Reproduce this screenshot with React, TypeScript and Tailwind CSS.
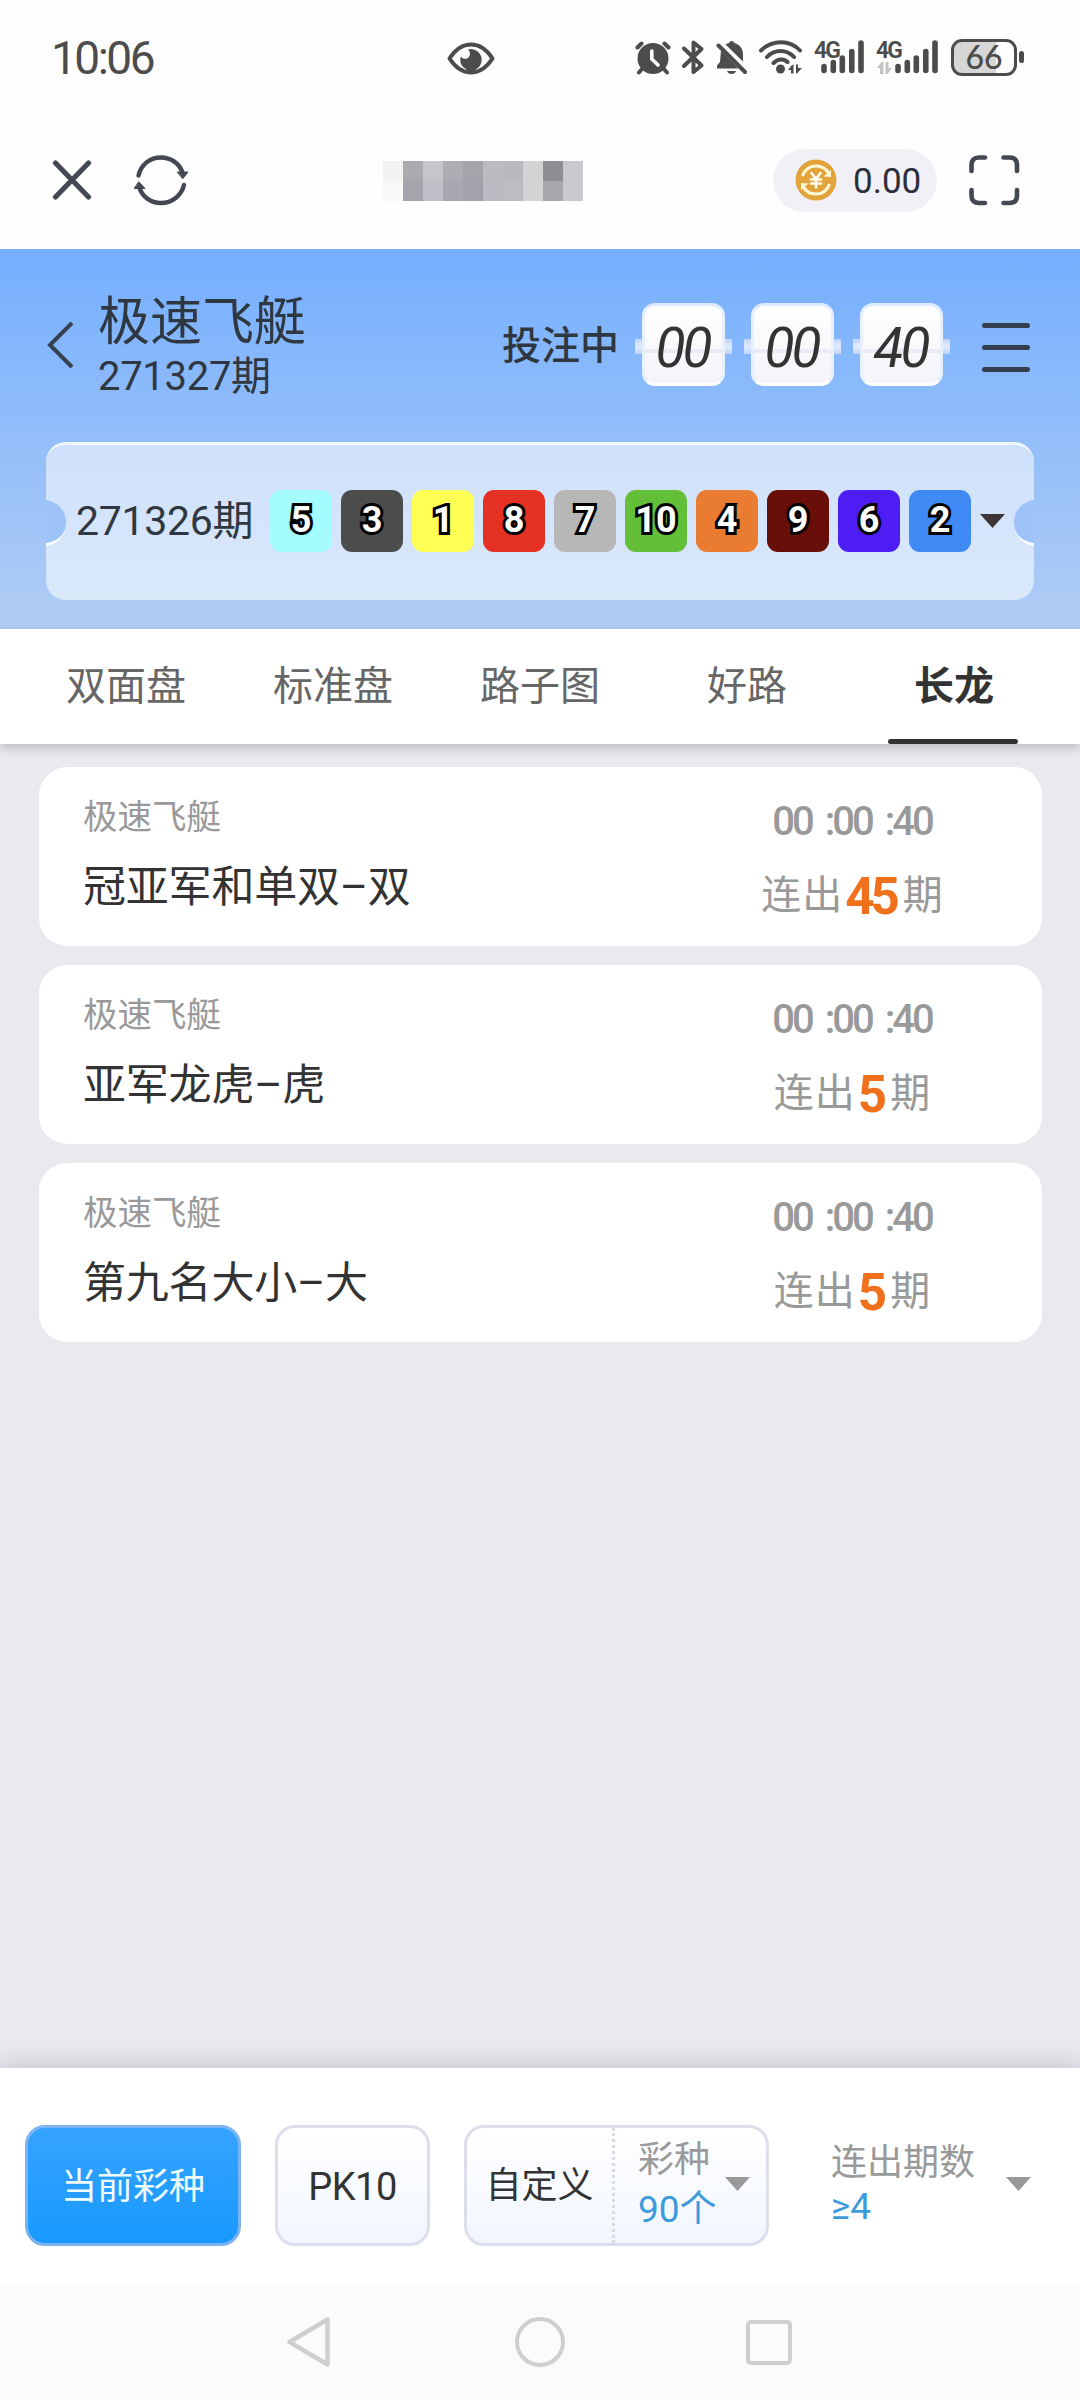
import clsx from "clsx"
import { useState } from "react"

const balls = [
  { num: 5, color: "bg-[#a4fcff]" },
  { num: 3, color: "bg-[#4c4c4c]" },
  { num: 1, color: "bg-[#ffff54]" },
  { num: 8, color: "bg-[#e53124]" },
  { num: 7, color: "bg-[#b7b7b7]" },
  { num: 10, color: "bg-[#63be38]" },
  { num: 4, color: "bg-[#ea7c31]" },
  { num: 9, color: "bg-[#670f08]" },
  { num: 6, color: "bg-[#4d1df3]" },
  { num: 2, color: "bg-[#408af6]" },
]

const tabs = ["双面盘", "标准盘", "路子图", "好路", "长龙"]

const streaks = [
  { game: "极速飞艇", title: "冠亚军和单双–双", time: "00 :00 :40", count: 45 },
  { game: "极速飞艇", title: "亚军龙虎–虎", time: "00 :00 :40", count: 5 },
  { game: "极速飞艇", title: "第九名大小–大", time: "00 :00 :40", count: 5 },
]

// Blurred site title, two rows of 20px cells
const mosaic = [
  "bg-[#f2f2f2]", "bg-[#aaabae]", "bg-[#c5c6ca]", "bg-[#adaeb3]", "bg-[#a4a4aa]",
  "bg-[#bbbcc0]", "bg-[#b7b9be]", "bg-[#d2d3d5]", "bg-[#8e8f94]", "bg-[#c8c9cd]",
  "bg-[#f8f8f8]", "bg-[#a4a5ac]", "bg-[#bfc0c5]", "bg-[#a7a8af]", "bg-[#a2a3aa]",
  "bg-[#bbbcc1]", "bg-[#bcbdc1]", "bg-[#d2d3d5]", "bg-[#a7a8ae]", "bg-[#c8c9cd]",
]

function SignalBars() {
  return (
    <svg width="43" height="34" viewBox="0 0 43 34" stroke="#4c4c4c" strokeWidth="5.6" strokeLinecap="round">
      <path d="M3 26.5V30.5M12.3 22.5V30.5M21.3 18V30.5M30.8 11.5V30.5M40 3V30.5" />
    </svg>
  )
}

function StatusBar() {
  return (
    <div className="relative flex h-[112px] shrink-0 items-center justify-between pr-[56px] pl-[51px] text-[#4c4c4c]">
      <span className="mt-1 text-[46px] leading-none tracking-[-2.5px]">10:06</span>
      <svg className="absolute top-[42px] left-[447px]" width="48" height="33" viewBox="0 0 48 33" fill="none">
        <path d="M2.5 16.5C8 8 15 2.5 24 2.5S40 8 45.5 16.5C40 25 33 30.5 24 30.5S8 25 2.5 16.5Z" stroke="#4c4c4c" strokeWidth="4" strokeLinejoin="round" />
        <path d="M21 7.5A10.7 10.7 0 1 1 13.8 14.5A5.2 5.2 0 0 0 21 16A5.5 5.5 0 0 0 21 7.5Z" fill="#4c4c4c" />
        <circle cx="24" cy="26" r="5" fill="#4c4c4c" />
      </svg>
      <div className="mt-[2px] flex items-center">
        <svg width="36" height="35" viewBox="0 0 36 35" fill="none" stroke="#4c4c4c" strokeWidth="4" strokeLinecap="round">
          <circle cx="18" cy="18.5" r="15.5" fill="#4c4c4c" stroke="none" />
          <path d="M2.5 7.5L6.5 3.5M33.5 7.5L29.5 3.5M7 29L4 32.5M29 29L32 32.5" />
          <path d="M16.8 11V19L23 25" stroke="#fff" strokeWidth="3.6" />
        </svg>
        <svg className="ml-[10px]" width="24" height="35" viewBox="0 0 24 35" fill="none" stroke="#4c4c4c" strokeWidth="4" strokeLinecap="round" strokeLinejoin="round">
          <path d="M3 8.5L20.5 25.5L12.5 32V22M12.5 14V2.5L20.5 9L3 26" />
        </svg>
        <svg className="ml-[11px]" width="31" height="35" viewBox="0 0 31 35" fill="none">
          <path d="M9.5 4.5C11 3.5 12 3.3 13 3C14 0.3 17.5 0.3 18.5 3C24 4.5 27 9 27 14V21.5Z" fill="#4c4c4c" />
          <path d="M5 10.5L22.5 28.5H1V25.5L4 22Z" fill="#4c4c4c" />
          <path d="M2.5 5.5L29 32" stroke="#4c4c4c" strokeWidth="4" strokeLinecap="round" />
          <path d="M11 31H20C19 35 12 35 11 31Z" fill="#4c4c4c" />
        </svg>
        <svg className="ml-[11px]" width="46" height="36" viewBox="0 0 46 36" fill="none" stroke="#4c4c4c" strokeWidth="4" strokeLinecap="round">
          <path d="M3 11.5C14 0.5 32 0.5 42 11.5M9 18C16.5 10 28.5 10 36 18M15.5 24C20 19.5 26 19.5 29.5 23" />
          <circle cx="22.5" cy="30" r="4.5" fill="#4c4c4c" stroke="none" />
          <path d="M35.5 25.5V34.5H33V31H30L34 26ZM38 34.5V25.5H40V29H44L39 34.5Z" fill="#4c4c4c" stroke="none" />
        </svg>
        <div className="relative ml-[17px] flex">
          <SignalBars />
          <span className="absolute -top-[1px] -left-[7px] text-[23px] leading-none font-semibold tracking-[-2px]">4G</span>
        </div>
        <div className="relative ml-[31px] flex">
          <SignalBars />
          <span className="absolute -top-[1px] -left-[19px] text-[23px] leading-none font-semibold tracking-[-2px]">4G</span>
          <svg className="absolute top-[22px] -left-[18px]" width="15" height="12" viewBox="0 0 15 12" fill="#c4c4c4">
            <path d="M6.5 0V12H3V6H0L4.5 0ZM8.5 12V0H11.5V6H15L10.5 12Z" />
          </svg>
        </div>
        <div className="ml-[13px] flex h-[37px] w-[66px] items-center justify-center rounded-[11px] border-[3px] border-[#4c4c4c] bg-[linear-gradient(90deg,#d6d6d6_70%,#fff_70%)] font-['Lato',sans-serif] text-[32px] leading-none font-medium">
          66
        </div>
        <span className="ml-[2px] h-[12px] w-[5px] rounded-sm bg-[#4c4c4c]" />
      </div>
    </div>
  )
}

function AppBar() {
  return (
    <div className="flex h-[137px] shrink-0 items-center pr-[60px] pb-[1px] pl-[52px]">
      <svg width="40" height="40" viewBox="0 0 40 40" stroke="#434853" strokeWidth="5.2" strokeLinecap="round">
        <path d="M3.5 3L36.5 37M36.5 3L3.5 37" />
      </svg>
      <svg className="ml-[42px]" width="54" height="52" viewBox="0 0 54 52" fill="none" stroke="#434853" strokeWidth="4.4" strokeLinecap="round">
        <path d="M4.5 21.5C7 10.5 16 3.5 27 3.5C37 3.5 45.5 9.5 48.5 18.5M50 31C47.5 41.5 38 49 27 49C17 49 8.5 43 5.5 34" />
        <path d="M43.5 18H54L49 24.5ZM0.5 34.5H11L5 28Z" fill="#434853" stroke="#434853" strokeWidth="1" />
      </svg>
      <div className="mt-[1px] ml-[195px] grid grid-cols-[repeat(10,20px)] grid-rows-[20px_20px]">
        {mosaic.map((color, index) => (
          <span key={index} className={color} />
        ))}
      </div>
      <div className="ml-[190px] flex h-[63px] w-[164px] items-center rounded-full bg-[#f1f0f6] pl-[22px]">
        <svg width="42" height="42" viewBox="0 0 42 42" fill="none">
          <circle cx="21" cy="21" r="20.5" fill="#e3a33b" />
          <path d="M7.5 17C10 10 15 7 21 7C27 7 31 9.5 33.5 14M34.5 25C32 32 27 35 21 35C15 35 11 32.5 8.5 28" stroke="#fff8d8" strokeWidth="3.2" />
          <path d="M28.5 17.5L36 18V11ZM13.5 24.5L6 24V31Z" fill="#fff8d8" />
          <path d="M16.5 14L21 20L25.5 14M21 20V28.5M16 20.5H26M16 24.5H26" stroke="#fffdf0" strokeWidth="2.6" strokeLinecap="round" />
        </svg>
        <span className="mt-[3px] ml-[16px] text-[35px] leading-none text-[#2b2f3c]">0.00</span>
      </div>
      <svg className="ml-[31px]" width="52" height="52" viewBox="0 0 52 52" fill="none" stroke="#434853" strokeWidth="4.6" strokeLinecap="round">
        <path d="M3.5 17V11Q3.5 3.5 11 3.5H17M35.5 3.5H41.5Q49 3.5 49 11V17M49 36V41.5Q49 49 41.5 49H35.5M17 49H11Q3.5 49 3.5 41.5V36" />
      </svg>
    </div>
  )
}

function FlipDigits({ value }: { value: string }) {
  return (
    <div className="relative mx-[7px] flex">
      <span className="absolute top-[36px] -left-[7px] h-[15px] w-[97px] bg-[linear-gradient(180deg,#bcd3fb,#e3ebfc,#bcd3fb)]" />
      <div className="relative flex h-[83px] w-[83px] items-center justify-center rounded-[13px] border-[3px] border-t-[#deeafd] border-r-[#e8f0fd] border-b-white border-l-[#e8f0fd] bg-[linear-gradient(180deg,#ffffff,#f4f4fa)]">
        <span className="absolute top-[43px] left-0 h-[4px] w-full bg-[#e9ecf6]" />
        <span className="relative mt-[7px] mr-[2px] text-[55px] leading-none tracking-[-3px] text-[#333] italic">
          {value}
        </span>
      </div>
    </div>
  )
}

function Header() {
  return (
    <div className="flex h-[380px] shrink-0 flex-col bg-[linear-gradient(180deg,#75afff,#b1cdf4)] px-[46px] text-[#2f3740]">
      <div className="flex h-[193px] items-center pb-[2px]">
        <svg width="30" height="50" viewBox="0 0 30 50" fill="none" stroke="#36424f" strokeWidth="4">
          <path d="M26 3L4 25L26 47" />
        </svg>
        <div className="mt-[3px] ml-[22px] flex flex-col">
          <span className="text-[52px] leading-[60px]">极速飞艇</span>
          <span className="text-[40px] leading-[47px] tracking-[-0.3px]">271327期</span>
        </div>
        <div className="ml-auto flex items-center">
          <span className="mt-[4px] mr-[16px] text-[39px] leading-none font-medium">投注中</span>
          <div className="flex gap-[12px]">
            <FlipDigits value="00" />
            <FlipDigits value="00" />
            <FlipDigits value="40" />
          </div>
          <button className="mt-[6px] mr-[4px] ml-[32px] flex w-[48px] flex-col gap-[17px]">
            <span className="h-[5px] rounded-full bg-[#333f50]" />
            <span className="h-[5px] rounded-full bg-[#333f50]" />
            <span className="h-[5px] rounded-full bg-[#333f50]" />
          </button>
        </div>
      </div>
      <div className="relative flex h-[158px] items-center overflow-hidden rounded-[20px] border-t-[3px] border-[#f2f8ff] bg-[linear-gradient(180deg,#cfe1fb,#dae8fa)] pb-[3px] pl-[30px]">
        <span className="absolute top-[55px] -left-[24px] h-[46px] w-[44px] rounded-full border-b-[3px] border-white bg-[#9dc3f9]" />
        <span className="absolute top-[55px] -right-[24px] h-[46px] w-[44px] rounded-full border-b-[3px] border-white bg-[#9dc3f9]" />
        <span className="w-[194px] text-[41px] leading-none tracking-[-0.3px]">271326期</span>
        <div className="flex gap-[9px]">
          {balls.map((ball) => (
            <span
              key={ball.num}
              className={clsx(
                "flex h-[62px] w-[62px] items-center justify-center rounded-[11px] pb-[2px] text-[36px] leading-none font-bold text-white [-webkit-text-stroke:6px_#000] [paint-order:stroke_fill]",
                ball.color
              )}
            >
              {ball.num}
            </span>
          ))}
        </div>
        <Caret className="ml-[9px] text-[#3e3538]" />
      </div>
    </div>
  )
}

function Caret({ className }: { className?: string }) {
  return (
    <svg className={clsx("shrink-0", className)} width="25" height="14" viewBox="0 0 25 14" fill="currentColor">
      <path d="M0 0H25L12.5 14Z" />
    </svg>
  )
}

export default function App() {
  const [activeTab, setActiveTab] = useState(4)

  return (
    <div className="flex h-[2400px] w-[1080px] flex-col overflow-hidden bg-[#e8eaf0] font-['Roboto','Noto_Sans_CJK_SC',sans-serif]">
      <div className="bg-[#fefefe]">
        <StatusBar />
        <AppBar />
      </div>
      <Header />

      <div className="relative flex h-[115px] shrink-0 justify-center bg-white shadow-[0_4px_10px_rgba(0,0,0,0.2)]">
        {tabs.map((tab, index) => (
          <button
            key={tab}
            onClick={() => setActiveTab(index)}
            className={clsx(
              "relative flex w-[207px] items-center justify-center text-[40px] leading-none",
              activeTab === index ? "font-bold text-[#333]" : "text-[#666]"
            )}
          >
            {tab}
            {activeTab === index && (
              <span className="absolute bottom-0 left-[37px] h-[5px] w-[130px] rounded-sm bg-[#333]" />
            )}
          </button>
        ))}
      </div>

      <div className="flex flex-1 flex-col gap-[19px] pt-[23px] pr-[38px] pl-[39px]">
        {streaks.map((item, index) => (
          <div key={index} className="flex h-[179px] justify-between rounded-[28px] bg-white pl-[44px]">
            <div className="flex flex-col pt-[28px]">
              <span className="text-[34.5px] leading-[44px] text-[#999]">{item.game}</span>
              <span className="mt-[21px] text-[43px] leading-[54px] tracking-[-0.2px] text-[#333]">{item.title}</span>
            </div>
            <div className="flex w-[380px] flex-col items-center pt-[33px] text-[#999]">
              <span className="text-[40px] leading-[44px] font-medium tracking-[-3px] [word-spacing:6px]">
                {item.time}
              </span>
              <div className="mt-[21px] flex items-center text-[40px] leading-[60px]">
                <span className="tracking-[1px]">连出</span>
                <span className="mt-[2px] mr-[7px] ml-[2px] text-[51px] font-bold tracking-[-4px] text-[#f1701c]">
                  {item.count}
                </span>
                <span>期</span>
              </div>
            </div>
          </div>
        ))}
      </div>

      <div className="flex h-[216px] shrink-0 bg-white pt-[57px] pl-[25px] text-[36px] leading-none shadow-[0_-4px_24px_rgba(0,0,0,0.16)]">
        <button className="flex h-[121px] w-[216px] items-center justify-center rounded-[20px] border-[3px] border-[#7ab5f2] bg-[linear-gradient(180deg,#35a3fe,#1899ff)] pt-[3px] text-[#effcff]">
          当前彩种
        </button>
        <button className="ml-[34px] flex h-[121px] w-[155px] items-center justify-center rounded-[20px] border-[3px] border-[#dcdfeb] bg-[linear-gradient(180deg,#ffffff,#f1f6ff)] pt-[2px] text-[38px] tracking-[-0.5px] text-[#333]">
          PK10
        </button>
        <div className="ml-[34px] flex h-[121px] w-[305px] rounded-[20px] border-[3px] border-[#dcdfeb] bg-[linear-gradient(180deg,#ffffff,#f1f6ff)]">
          <button className="flex w-[148px] items-center justify-center border-r-[3px] border-dotted border-[#d8dbe2] text-[#333]">
            自定义
          </button>
          <button className="flex items-center pl-[23px] text-left">
            <div className="flex w-[78px] flex-col">
              <span className="leading-[48px] text-[#999]">彩种</span>
              <span className="text-[37px] leading-[52px] whitespace-nowrap text-[#3b9bdc]">90个</span>
            </div>
            <Caret className="mb-[4px] ml-[9px] text-[#999]" />
          </button>
        </div>
        <button className="ml-[62px] flex h-[121px] items-center text-left">
          <div className="-mt-[5px] flex w-[146px] flex-col">
            <span className="leading-[48px] text-[#999]">连出期数</span>
            <span className="text-[37px] leading-[40px] text-[#3b9bdc]">≥4</span>
          </div>
          <Caret className="mb-[4px] ml-[29px] text-[#999]" />
        </button>
      </div>

      <div className="flex h-[116px] shrink-0 items-center bg-[#fbfbfb] pl-[286px]">
        <svg width="45" height="52" viewBox="0 0 45 52" fill="none" stroke="#cfcfcf" strokeWidth="4.5" strokeLinejoin="round">
          <path d="M41.5 3.5V48.5L3.5 26Z" />
        </svg>
        <span className="ml-[184px] h-[50px] w-[50px] rounded-full border-[4.5px] border-[#cfcfcf]" />
        <span className="ml-[181px] h-[45px] w-[46px] rounded-[5px] border-[4.5px] border-[#cfcfcf]" />
      </div>
    </div>
  )
}
